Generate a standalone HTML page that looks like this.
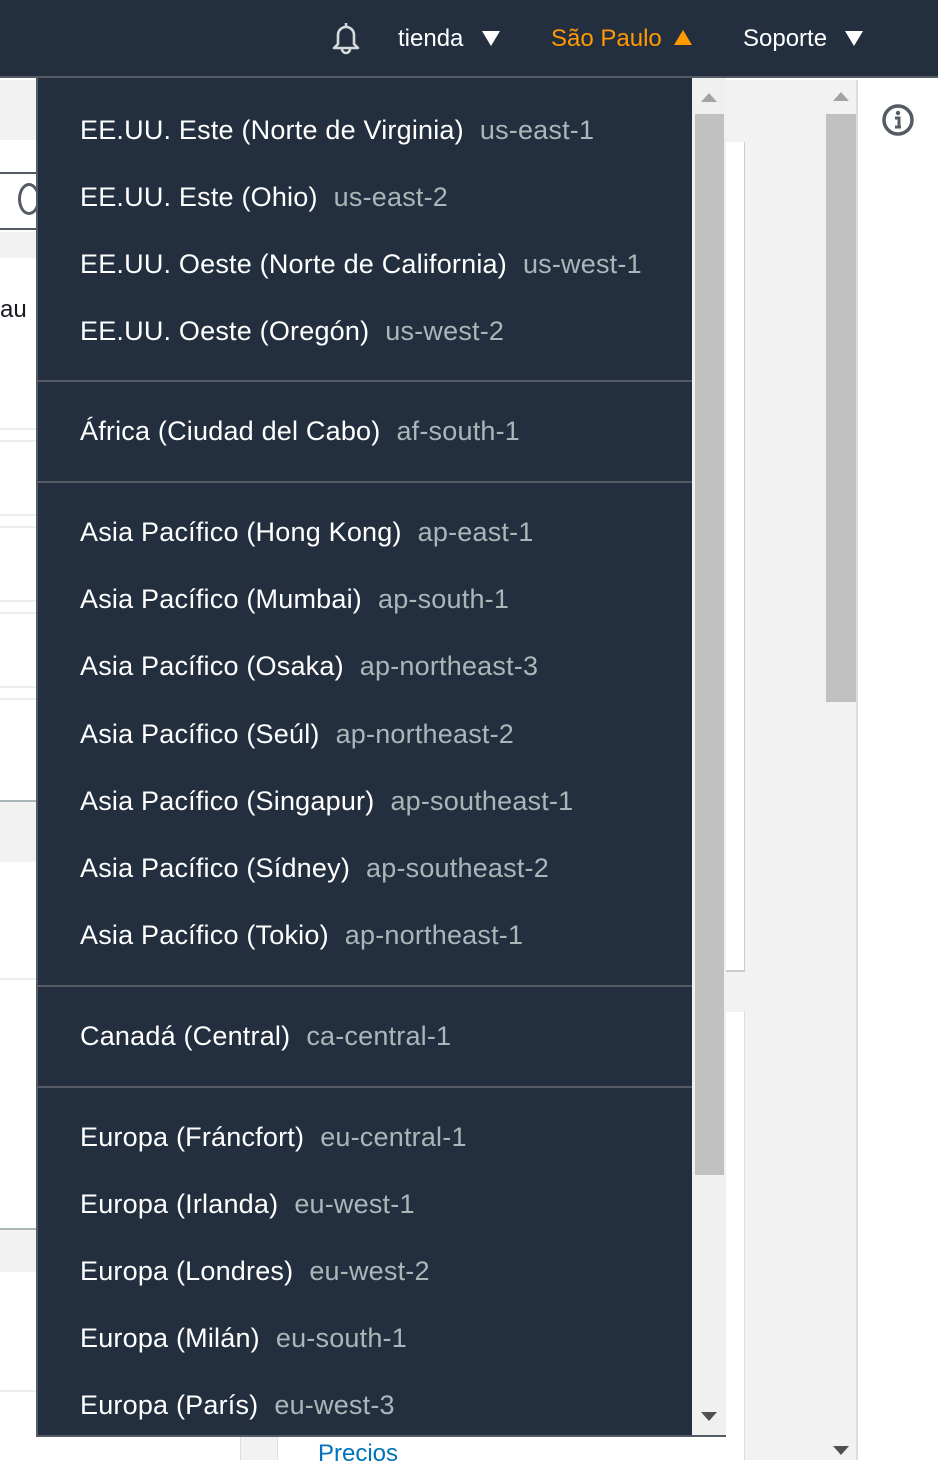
<!DOCTYPE html><html><head><meta charset="utf-8"><style>
*{margin:0;padding:0;box-sizing:border-box}
body{width:938px;height:1460px;position:relative;overflow:hidden;background:#fff;font-family:"Liberation Sans",sans-serif}
.a{position:absolute}
.hdr{left:0;top:0;width:938px;height:78px;background:#232f3e;border-bottom:2px solid #545b64}
.ht{top:25px;font-size:24px;color:#fff;letter-spacing:0px}
.dd{left:36px;top:78px;width:690px;height:1359px;background:#232f3e;border:2px solid #545b64;border-top:none}
.it{position:absolute;left:42px;font-size:27px;color:#fff;letter-spacing:0.2px;white-space:nowrap;line-height:30px}
.it span{color:#aab7b8;margin-left:16px}
.dv{position:absolute;left:0;width:654px;height:2px;background:#545b64}
</style></head><body>
<div class="a" style="left:0;top:80px;width:36px;height:60px;background:#f2f2f2"></div>
<div class="a" style="left:0;top:172px;width:36px;height:58px;border:2px solid #545b64;border-left:none;border-right:none;background:#fff"></div>
<div class="a" style="left:18px;top:183px;width:22px;height:32px;border:3px solid #545b64;border-radius:50%"></div>
<div class="a" style="left:0;top:232px;width:36px;height:26px;background:#f2f2f2"></div>
<div class="a" style="left:0;top:296px;font-size:24px;color:#16191f">au</div>
<div class="a" style="left:0;top:428px;width:36px;height:2px;background:#eaeded"></div>
<div class="a" style="left:0;top:440px;width:36px;height:2px;background:#eaeded"></div>
<div class="a" style="left:0;top:514px;width:36px;height:2px;background:#eaeded"></div>
<div class="a" style="left:0;top:526px;width:36px;height:2px;background:#eaeded"></div>
<div class="a" style="left:0;top:600px;width:36px;height:2px;background:#eaeded"></div>
<div class="a" style="left:0;top:612px;width:36px;height:2px;background:#eaeded"></div>
<div class="a" style="left:0;top:686px;width:36px;height:2px;background:#eaeded"></div>
<div class="a" style="left:0;top:698px;width:36px;height:2px;background:#eaeded"></div>
<div class="a" style="left:0;top:800px;width:36px;height:2px;background:#aab7b8"></div>
<div class="a" style="left:0;top:802px;width:36px;height:60px;background:#f2f2f2"></div>
<div class="a" style="left:0;top:978px;width:36px;height:2px;background:#eaeded"></div>
<div class="a" style="left:0;top:1228px;width:36px;height:2px;background:#aab7b8"></div>
<div class="a" style="left:0;top:1230px;width:36px;height:42px;background:#f2f2f2"></div>
<div class="a" style="left:0;top:1390px;width:36px;height:2px;background:#eaeded"></div>
<div class="a" style="left:240px;top:1437px;width:38px;height:23px;background:#f2f2f2;border-left:1px solid #ddd;border-right:1px solid #ddd"></div>
<div class="a" style="left:318px;top:1440px;font-size:24px;color:#0073bb">Precios</div>
<div class="a" style="left:726px;top:80px;width:132px;height:1380px;background:#f2f2f2;border-right:2px solid #ddd"></div>
<div class="a" style="left:726px;top:142px;width:19px;height:830px;background:#fff;border-right:1px solid #ccc;border-bottom:2px solid #ccc"></div>
<div class="a" style="left:726px;top:1012px;width:19px;height:448px;background:#fff;border-right:1px solid #ddd"></div>
<div class="a" style="left:826px;top:114px;width:30px;height:588px;background:#c1c1c1"></div>
<div class="a" style="left:833px;top:92px;width:0;height:0;border-left:8px solid transparent;border-right:8px solid transparent;border-bottom:9px solid #a3a3a3"></div>
<div class="a" style="left:833px;top:1446px;width:0;height:0;border-left:8px solid transparent;border-right:8px solid transparent;border-top:9px solid #505050"></div>
<svg class="a" style="left:880px;top:102px" width="36" height="36" viewBox="0 0 36 36"><circle cx="18" cy="18" r="14" fill="none" stroke="#545b64" stroke-width="3.5"/><circle cx="18" cy="11" r="2.2" fill="#545b64"/><path d="M15 16h4v9M15 25h6" stroke="#545b64" stroke-width="3" fill="none"/></svg>
<div class="a hdr"></div>
<svg class="a" style="left:329px;top:20px" width="34" height="36" viewBox="0 0 34 36"><path d="M17 3v3M9 24V15a8 8 0 0 1 16 0v9l4 4H5z" fill="none" stroke="#d5dbdb" stroke-width="2.6" stroke-linejoin="round"/><path d="M13 29a4 4 0 0 0 8 0" fill="none" stroke="#d5dbdb" stroke-width="2.6"/></svg>
<div class="a ht" style="left:398px">tienda</div>
<div class="a" style="left:482px;top:31px;border-left:9px solid transparent;border-right:9px solid transparent;border-top:15px solid #fff"></div>
<div class="a ht" style="left:551px;color:#ff9900">São Paulo</div>
<div class="a" style="left:674px;top:30px;border-left:9px solid transparent;border-right:9px solid transparent;border-bottom:15px solid #ff9900"></div>
<div class="a ht" style="left:743px">Soporte</div>
<div class="a" style="left:845px;top:31px;border-left:9px solid transparent;border-right:9px solid transparent;border-top:15px solid #fff"></div>
<div class="a dd">
<div class="a" style="left:654px;top:0;width:34px;height:1357px;background:#f0f0f0"></div>
<div class="a" style="left:657px;top:36px;width:29px;height:1061px;background:#c1c1c1"></div>
<div class="a" style="left:663px;top:15px;border-left:8px solid transparent;border-right:8px solid transparent;border-bottom:9px solid #a3a3a3"></div>
<div class="a" style="left:663px;top:1334px;border-left:8px solid transparent;border-right:8px solid transparent;border-top:9px solid #505050"></div>
<div class="it" style="top:37px">EE.UU. Este (Norte de Virginia)<span>us-east-1</span></div>
<div class="it" style="top:104px">EE.UU. Este (Ohio)<span>us-east-2</span></div>
<div class="it" style="top:171px">EE.UU. Oeste (Norte de California)<span>us-west-1</span></div>
<div class="it" style="top:238px">EE.UU. Oeste (Oregón)<span>us-west-2</span></div>
<div class="dv" style="top:302px"></div>
<div class="it" style="top:338px">África (Ciudad del Cabo)<span>af-south-1</span></div>
<div class="dv" style="top:403px"></div>
<div class="it" style="top:439px">Asia Pacífico (Hong Kong)<span>ap-east-1</span></div>
<div class="it" style="top:506px">Asia Pacífico (Mumbai)<span>ap-south-1</span></div>
<div class="it" style="top:573px">Asia Pacífico (Osaka)<span>ap-northeast-3</span></div>
<div class="it" style="top:641px">Asia Pacífico (Seúl)<span>ap-northeast-2</span></div>
<div class="it" style="top:708px">Asia Pacífico (Singapur)<span>ap-southeast-1</span></div>
<div class="it" style="top:775px">Asia Pacífico (Sídney)<span>ap-southeast-2</span></div>
<div class="it" style="top:842px">Asia Pacífico (Tokio)<span>ap-northeast-1</span></div>
<div class="dv" style="top:907px"></div>
<div class="it" style="top:943px">Canadá (Central)<span>ca-central-1</span></div>
<div class="dv" style="top:1008px"></div>
<div class="it" style="top:1044px">Europa (Fráncfort)<span>eu-central-1</span></div>
<div class="it" style="top:1111px">Europa (Irlanda)<span>eu-west-1</span></div>
<div class="it" style="top:1178px">Europa (Londres)<span>eu-west-2</span></div>
<div class="it" style="top:1245px">Europa (Milán)<span>eu-south-1</span></div>
<div class="it" style="top:1312px">Europa (París)<span>eu-west-3</span></div>
</div>
</body></html>
